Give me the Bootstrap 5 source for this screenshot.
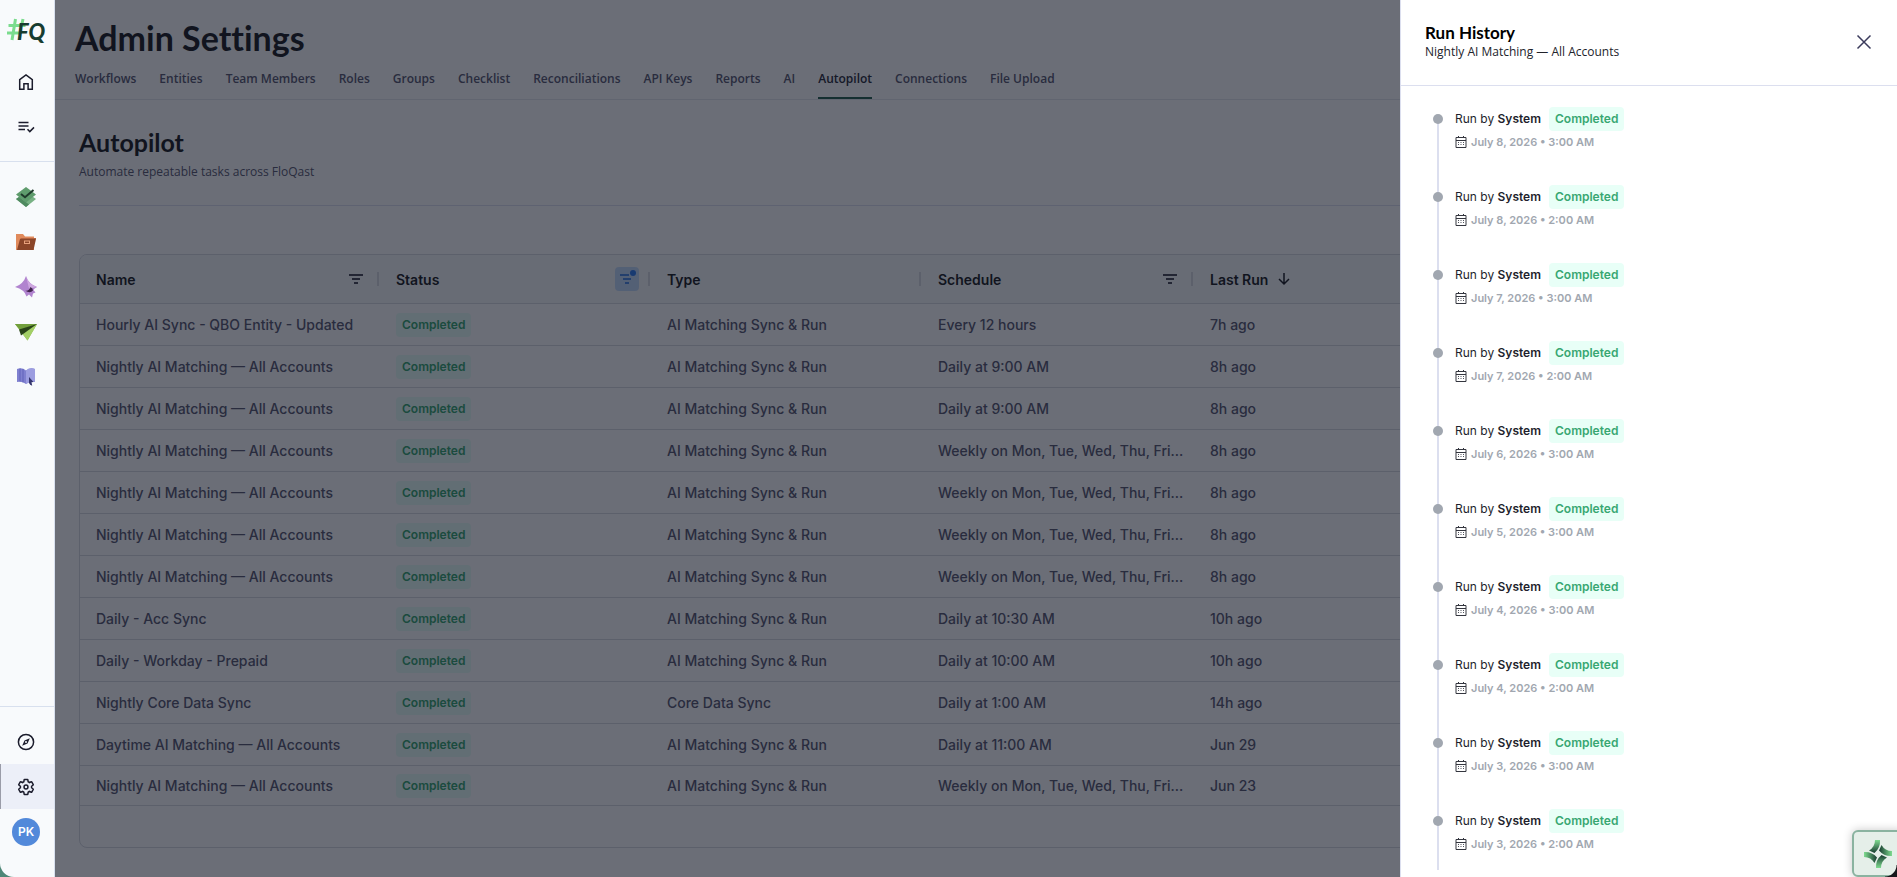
<!DOCTYPE html>
<html lang="en">
<head>
<meta charset="utf-8">
<meta name="viewport" content="width=device-width, initial-scale=1">
<title>Admin Settings – Autopilot</title>
<link href="https://cdn.jsdelivr.net/npm/bootstrap@5.3.0/dist/css/bootstrap.min.css" rel="stylesheet">
<style>
body{font-family:Inter,"Noto Sans",sans-serif;font-size:14px;color:#5a5a72;background:#fff;overflow:hidden}
.brand-font{font-family:Lato,"Open Sans",sans-serif;font-variant-ligatures:none}
.side-rail{width:55px;z-index:1050;background:#f8fafc;border-right:1px solid #d8e0ee;color:#1b1c2c;border-bottom-left-radius:14px}
.rail-corner{background:#4e8777;z-index:1049}
.rail-link{height:45px;width:100%;padding-right:2px;color:inherit}
.rail-link.current{background:#eceff8;box-shadow:inset 1px 0 #9a9ca8}
.rail-rule{border-top:1px solid #d8e0ee;padding-top:12px}
.rail-rule.upper{margin-top:12px}
.rail-logo{height:59px;padding:8px 0 0 6px}
.rail-user{padding:9px 0 31px 12px}
.avatar{width:28px;height:28px;background:#5289da;color:#fff;font-size:12px;font-weight:600}
.page-head{padding:18px 20px 0;border-bottom:1px solid #e6e8ee}
.page-head h1{font-size:34px;line-height:40px;font-weight:700;color:#1e1f24}
.tab-row{gap:23px;margin-top:11px}
.tab-row a{font-family:"Open Sans",sans-serif;font-size:12px;line-height:20px;font-weight:600;color:#5a5a72;text-decoration:none;padding-bottom:8px;border-bottom:2px solid transparent}
.tab-row a.active{color:#2c2d3a;border-color:#2a6350}
.section-head{padding:27px 0 23px;border-bottom:1px solid #dfe1f0}
.section-head h2{font-size:25px;line-height:30px;font-weight:700;color:#1e1f24}
.section-head p{font-family:"Open Sans",sans-serif;font-size:12px;line-height:20px;margin-top:5px}
.grid-frame{margin-top:48px;border:1px solid #d9dbe2;border-radius:8px;padding-bottom:41px;overflow:hidden}
.run-grid{table-layout:fixed;width:100%;border-collapse:separate;border-spacing:0}
.run-grid th,.run-grid td{padding:0 12px 0 16px;border-bottom:1px solid #d9dbe2;white-space:nowrap;overflow:hidden;text-overflow:ellipsis}
.run-grid th{height:49px;background:#f8fafb;color:#1e1f24;font-weight:600;position:relative}
.run-grid th:not(:last-child)::after{content:"";position:absolute;right:1px;top:17px;width:2px;height:14px;background:#d9dbe2}
.run-grid td{height:42px;font-weight:500;padding-right:4px}
.run-grid tr:last-child td{height:40px}
.w-name{width:300px}.w-mid{width:271px}.w-plan{width:272px}
.filter-btn{width:24px;height:24px;border:0;padding:0;border-radius:4px;background:none;color:#4b4d58}
.filter-btn.on{background:#c4dcfb;color:#4b8ae6}
.state{display:inline-block;height:24px;line-height:24px;padding:0 6px;border-radius:4px;font-size:12px;font-weight:600;color:#38a772;background:#e8fff7;vertical-align:middle}
.dim{position:fixed;inset:0;background:rgba(8,13,28,.6);z-index:1040}
.offcanvas.history{--bs-offcanvas-width:497px;border-left:1px solid #dcdfef;color:#1e1f2d;background:#fff}
.history .offcanvas-header{height:86px;border-bottom:1px solid #dcdfef;padding:0 24px 2px}
.history h2{font-size:17px;line-height:20px;font-weight:700;color:#000}
.history .sub{font-family:"Open Sans",sans-serif;font-size:12px;line-height:18px;color:#22232b}
.close-x{border:0;background:none;padding:0;width:18px;height:18px;color:#3b3b5c}
.history .offcanvas-body{padding:21px 32px 0;overflow:hidden}
.run-item{height:78px;padding-left:22px;position:relative;font-size:12px}
.run-item::before{content:"";position:absolute;left:4px;top:12px;bottom:-12px;width:2px;background:#dcdfef}
.run-item::after{content:"";position:absolute;left:0;top:7px;width:10px;height:10px;border-radius:50%;background:#a1a7b0}
.run-item:last-child{height:61px}
.run-item:last-child::before{bottom:0}
.run-item b{font-weight:600}
.when{font-size:11px;line-height:18px;font-weight:600;color:#a1a7b0;margin-top:2px}
.assist{position:fixed;right:-8px;bottom:0;width:53px;height:47px;border:2px solid #8ab3a0;border-radius:6px;background:#e5efe9;z-index:1060;padding:0 0 0 10px;text-align:left;box-shadow:0 0 10px rgba(0,0,0,.22)}
.win-corner{position:fixed;right:0;bottom:0;width:12px;height:12px;z-index:1061;background:radial-gradient(circle at 0 0,transparent 11px,#16181b 12px)}
</style>
</head>
<body>
<svg class="d-none" xmlns="http://www.w3.org/2000/svg">
  <symbol id="cal" viewBox="0 0 12 12"><path d="M1 1.500h10v10H1z" fill="none" stroke="#34363f"/><path d="M1 4.500h10M3.500 0v2M8.500 0v2" fill="none" stroke="#34363f"/><path d="M3 6.500h6M3 8.500h6" stroke="#50525c" stroke-dasharray="1 1.500" fill="none"/></symbol>
  <symbol id="filter" viewBox="0 0 24 24"><path d="M5 8h14M8 12h8M10 16h4" fill="none" stroke="currentColor" stroke-width="2"/></symbol>
</svg>

<div class="d-flex vh-100">
  <div class="rail-corner flex-shrink-0">
  <nav class="side-rail d-flex flex-column vh-100" aria-label="Main">
    <a class="rail-logo d-block" href="#" aria-label="FQ home">
      <svg class="overflow-visible" width="46" height="44" viewBox="0 0 46 44"><g stroke="#7bdc8e" stroke-width="3" fill="none"><path d="M9.500 11L6 32M17 11l-1.500 7M2.500 17.500h17M1 25h12"/></g><text x="11" y="32" font-family="Lato,sans-serif" font-size="22" font-weight="900" font-style="italic" fill="#173c30">FQ</text></svg>
    </a>
    <a class="rail-link d-flex align-items-center justify-content-center" href="#" aria-label="Home"><svg width="20" height="20" viewBox="0 0 20 20" fill="none" stroke="currentColor" stroke-width="1.500"><path d="M3.700 7.600L10 3l6.300 4.600v9.700h-4.200v-5.600H7.900v5.600H3.700z"/></svg></a>
    <a class="rail-link d-flex align-items-center justify-content-center" href="#" aria-label="Tasks"><svg width="20" height="20" viewBox="0 0 20 20" fill="none" stroke="currentColor" stroke-width="1.500"><path d="M2.500 5.500h10M2.500 9h10M2.500 12.500h6.500M11.500 12.300l2.300 2.300 4.200-4.200"/></svg></a>
    <div class="rail-rule upper"></div>
    <a class="rail-link d-flex align-items-center justify-content-center" href="#" aria-label="Close"><svg width="22" height="22" viewBox="0 0 22 22"><path d="M1 13l10-7 10 7-10 8z" fill="#78b184"/><path d="M1 13l10 8 3-2.400L4 10.900z" fill="#4f8a60"/><path d="M1 8.500L11 1l10 7.500-10 8z" fill="#5f9c6d"/><path d="M6 8l4 3.300L18.500 4" fill="none" stroke="#1f3a2b" stroke-width="2"/></svg></a>
    <a class="rail-link d-flex align-items-center justify-content-center" href="#" aria-label="Folders"><svg width="22" height="22" viewBox="0 0 22 22"><path d="M1 3h7l2 2.500h9V19H1z" fill="#e08a5c"/><path d="M5 8h16l-2.500 11H2z" fill="#8b4529"/><path d="M5 8h16v-1H6z" fill="#b5633f"/><rect x="9.500" y="10" width="5" height="2.500" fill="none" stroke="#e9a27d"/></svg></a>
    <a class="rail-link d-flex align-items-center justify-content-center" href="#" aria-label="AI"><svg width="22" height="22" viewBox="0 0 22 22"><path d="M11 0q2.500 8 11 11-3 1.500-3.500 3l2 2.500-2.500 1-1 4-3-3-2.500 2q-2-7-11.500-9.500Q8.500 8 11 0z" fill="#b184cf"/><path d="M11 0q2 8 11 11l-8 1.500z" fill="#cda6df"/><path d="M10 14.500q4 1 5.500-3.500 2.500 1 2.500 3.500-3 3.500-8 0z" fill="#43264f"/></svg></a>
    <a class="rail-link d-flex align-items-center justify-content-center" href="#" aria-label="Send"><svg width="22" height="22" viewBox="0 0 22 22"><path d="M0 3h22L12.500 19.500z" fill="#8fbd50"/><path d="M0 3h22L5 9z" fill="#729f3c"/><path d="M22 3L7 12l5.500 7.500z" fill="#a3cf66"/><path d="M22 3L4 8.500l2 6z" fill="#294319"/></svg></a>
    <a class="rail-link d-flex align-items-center justify-content-center" href="#" aria-label="Library"><svg width="22" height="22" viewBox="0 0 22 22"><path d="M2 3q5-2 9 1.500Q15 1 20 3v13q-5-1-9 2-4-3-9-2z" fill="#7f80d0"/><path d="M11 4.500Q15 1 20 3v13q-5-1-9 2z" fill="#9c9de0"/><path d="M5 2.500v13M8 3v13.500" stroke="#6263bb"/><path d="M14 11l4.500 5-2 .3.700 3.500-2-1L14 17z" fill="#34346e"/></svg></a>
    <div class="mt-auto rail-rule"></div>
    <a class="rail-link d-flex align-items-center justify-content-center" href="#" aria-label="Explore"><svg width="20" height="20" viewBox="0 0 20 20" fill="none" stroke="currentColor" stroke-width="1.500"><circle cx="10" cy="10" r="7.600"/><path d="M13.800 6.200l-2.300 5.300-5.300 2.300 2.300-5.300z" fill="currentColor" stroke="none"/><circle cx="10" cy="10" r="1" fill="#f8fafc" stroke="none"/></svg></a>
    <a class="rail-link current d-flex align-items-center justify-content-center" href="#" aria-label="Settings"><svg width="18" height="18" viewBox="0 0 24 24" fill="none" stroke="currentColor" stroke-width="2"><path d="M19.430 12.980c.040-.320.070-.640.070-.980s-.030-.660-.070-.980l2.110-1.650c.190-.150.240-.420.120-.640l-2-3.460c-.090-.160-.260-.250-.440-.250-.060 0-.120.010-.170.030l-2.490 1c-.520-.400-1.080-.730-1.690-.980l-.380-2.650C14.460 2.180 14.250 2 14 2h-4c-.250 0-.460.180-.490.420l-.380 2.650c-.610.250-1.170.590-1.690.980l-2.490-1c-.060-.020-.120-.030-.180-.030-.170 0-.340.090-.430.250l-2 3.460c-.130.220-.070.490.120.640l2.110 1.650c-.040.320-.070.650-.070.980s.030.660.070.980l-2.110 1.650c-.190.150-.240.420-.120.640l2 3.460c.090.160.260.250.440.250.060 0 .120-.010.170-.030l2.490-1c.520.400 1.080.730 1.690.980l.380 2.650c.030.240.240.420.490.420h4c.250 0 .460-.180.490-.420l.380-2.650c.610-.250 1.170-.590 1.690-.980l2.490 1c.060.020.120.030.180.030.170 0 .340-.090.430-.250l2-3.460c.120-.220.070-.490-.120-.640z"/><circle cx="12" cy="12" r="2.600"/></svg></a>
    <div class="rail-user"><div class="avatar rounded-circle d-flex align-items-center justify-content-center">PK</div></div>
  </nav>
  </div>

  <main class="flex-grow-1" style="min-width:0">
    <header class="page-head brand-font">
      <h1 class="m-0">Admin Settings</h1>
      <nav class="tab-row d-flex" aria-label="Settings">
        <a href="#">Workflows</a><a href="#">Entities</a><a href="#">Team Members</a><a href="#">Roles</a><a href="#">Groups</a><a href="#">Checklist</a><a href="#">Reconciliations</a><a href="#">API Keys</a><a href="#">Reports</a><a href="#">AI</a><a href="#" class="active" aria-current="page">Autopilot</a><a href="#">Connections</a><a href="#">File Upload</a>
      </nav>
    </header>
    <section class="px-4">
      <div class="section-head brand-font">
        <h2 class="m-0">Autopilot</h2>
        <p class="mb-0">Automate repeatable tasks across FloQast</p>
      </div>
      <div class="grid-frame">
        <table class="run-grid">
          <colgroup><col class="w-name"><col class="w-mid"><col class="w-mid"><col class="w-plan"><col></colgroup>
          <thead><tr>
            <th><div class="d-flex align-items-center justify-content-between">Name <button class="filter-btn" aria-label="Filter name"><svg class="d-block" width="24" height="24"><use href="#filter"/></svg></button></div></th>
            <th><div class="d-flex align-items-center justify-content-between">Status <button class="filter-btn on" aria-label="Filter status"><svg class="d-block" width="24" height="24" viewBox="0 0 24 24"><path d="M5 8h9M8 12h8M10 16h4" fill="none" stroke="currentColor" stroke-width="2"/><circle cx="18" cy="6" r="3" fill="#2f7df0"/></svg></button></div></th>
            <th>Type</th>
            <th><div class="d-flex align-items-center justify-content-between">Schedule <button class="filter-btn" aria-label="Filter schedule"><svg class="d-block" width="24" height="24"><use href="#filter"/></svg></button></div></th>
            <th><div class="d-flex align-items-center">Last Run <svg class="ms-2" width="16" height="16" viewBox="0 0 16 16" fill="none" stroke="currentColor" stroke-width="1.500"><path d="M8 2v11M3 8l5 5 5-5"/></svg></div></th>
          </tr></thead>
          <tbody>
            <tr><td>Hourly AI Sync - QBO Entity - Updated</td><td><span class="state">Completed</span></td><td>AI Matching Sync &amp; Run</td><td>Every 12 hours</td><td>7h ago</td></tr>
            <tr><td>Nightly AI Matching — All Accounts</td><td><span class="state">Completed</span></td><td>AI Matching Sync &amp; Run</td><td>Daily at 9:00 AM</td><td>8h ago</td></tr>
            <tr><td>Nightly AI Matching — All Accounts</td><td><span class="state">Completed</span></td><td>AI Matching Sync &amp; Run</td><td>Daily at 9:00 AM</td><td>8h ago</td></tr>
            <tr><td>Nightly AI Matching — All Accounts</td><td><span class="state">Completed</span></td><td>AI Matching Sync &amp; Run</td><td>Weekly on Mon, Tue, Wed, Thu, Fri...</td><td>8h ago</td></tr>
            <tr><td>Nightly AI Matching — All Accounts</td><td><span class="state">Completed</span></td><td>AI Matching Sync &amp; Run</td><td>Weekly on Mon, Tue, Wed, Thu, Fri...</td><td>8h ago</td></tr>
            <tr><td>Nightly AI Matching — All Accounts</td><td><span class="state">Completed</span></td><td>AI Matching Sync &amp; Run</td><td>Weekly on Mon, Tue, Wed, Thu, Fri...</td><td>8h ago</td></tr>
            <tr><td>Nightly AI Matching — All Accounts</td><td><span class="state">Completed</span></td><td>AI Matching Sync &amp; Run</td><td>Weekly on Mon, Tue, Wed, Thu, Fri...</td><td>8h ago</td></tr>
            <tr><td>Daily - Acc Sync</td><td><span class="state">Completed</span></td><td>AI Matching Sync &amp; Run</td><td>Daily at 10:30 AM</td><td>10h ago</td></tr>
            <tr><td>Daily - Workday - Prepaid</td><td><span class="state">Completed</span></td><td>AI Matching Sync &amp; Run</td><td>Daily at 10:00 AM</td><td>10h ago</td></tr>
            <tr><td>Nightly Core Data Sync</td><td><span class="state">Completed</span></td><td>Core Data Sync</td><td>Daily at 1:00 AM</td><td>14h ago</td></tr>
            <tr><td>Daytime AI Matching — All Accounts</td><td><span class="state">Completed</span></td><td>AI Matching Sync &amp; Run</td><td>Daily at 11:00 AM</td><td>Jun 29</td></tr>
            <tr><td>Nightly AI Matching — All Accounts</td><td><span class="state">Completed</span></td><td>AI Matching Sync &amp; Run</td><td>Weekly on Mon, Tue, Wed, Thu, Fri...</td><td>Jun 23</td></tr>
          </tbody>
        </table>
      </div>
    </section>
  </main>
</div>

<div class="dim"></div>

<aside class="offcanvas offcanvas-end show history" data-bs-backdrop="false" data-bs-scroll="true" tabindex="-1" aria-labelledby="historyTitle">
  <div class="offcanvas-header brand-font">
    <div><h2 class="m-0" id="historyTitle">Run History</h2><div class="sub">Nightly AI Matching — All Accounts</div></div>
    <button class="close-x" aria-label="Close"><svg class="d-block" width="18" height="18" viewBox="0 0 18 18" stroke="currentColor" stroke-width="1.500"><path d="M2.500 2.500l13 13M15.500 2.500l-13 13"/></svg></button>
  </div>
  <div class="offcanvas-body">
    <ol class="list-unstyled m-0">
      <li class="run-item"><div class="d-flex align-items-center gap-2"><span>Run by <b>System</b></span><span class="state">Completed</span></div><div class="when d-flex align-items-center"><svg class="me-1" width="12" height="12"><use href="#cal"/></svg>July 8, 2026 • 3:00 AM</div></li>
      <li class="run-item"><div class="d-flex align-items-center gap-2"><span>Run by <b>System</b></span><span class="state">Completed</span></div><div class="when d-flex align-items-center"><svg class="me-1" width="12" height="12"><use href="#cal"/></svg>July 8, 2026 • 2:00 AM</div></li>
      <li class="run-item"><div class="d-flex align-items-center gap-2"><span>Run by <b>System</b></span><span class="state">Completed</span></div><div class="when d-flex align-items-center"><svg class="me-1" width="12" height="12"><use href="#cal"/></svg>July 7, 2026 • 3:00 AM</div></li>
      <li class="run-item"><div class="d-flex align-items-center gap-2"><span>Run by <b>System</b></span><span class="state">Completed</span></div><div class="when d-flex align-items-center"><svg class="me-1" width="12" height="12"><use href="#cal"/></svg>July 7, 2026 • 2:00 AM</div></li>
      <li class="run-item"><div class="d-flex align-items-center gap-2"><span>Run by <b>System</b></span><span class="state">Completed</span></div><div class="when d-flex align-items-center"><svg class="me-1" width="12" height="12"><use href="#cal"/></svg>July 6, 2026 • 3:00 AM</div></li>
      <li class="run-item"><div class="d-flex align-items-center gap-2"><span>Run by <b>System</b></span><span class="state">Completed</span></div><div class="when d-flex align-items-center"><svg class="me-1" width="12" height="12"><use href="#cal"/></svg>July 5, 2026 • 3:00 AM</div></li>
      <li class="run-item"><div class="d-flex align-items-center gap-2"><span>Run by <b>System</b></span><span class="state">Completed</span></div><div class="when d-flex align-items-center"><svg class="me-1" width="12" height="12"><use href="#cal"/></svg>July 4, 2026 • 3:00 AM</div></li>
      <li class="run-item"><div class="d-flex align-items-center gap-2"><span>Run by <b>System</b></span><span class="state">Completed</span></div><div class="when d-flex align-items-center"><svg class="me-1" width="12" height="12"><use href="#cal"/></svg>July 4, 2026 • 2:00 AM</div></li>
      <li class="run-item"><div class="d-flex align-items-center gap-2"><span>Run by <b>System</b></span><span class="state">Completed</span></div><div class="when d-flex align-items-center"><svg class="me-1" width="12" height="12"><use href="#cal"/></svg>July 3, 2026 • 3:00 AM</div></li>
      <li class="run-item"><div class="d-flex align-items-center gap-2"><span>Run by <b>System</b></span><span class="state">Completed</span></div><div class="when d-flex align-items-center"><svg class="me-1" width="12" height="12"><use href="#cal"/></svg>July 3, 2026 • 2:00 AM</div></li>
    </ol>
  </div>
</aside>

<button class="assist" aria-label="Assistant"><svg width="28" height="28" viewBox="0 0 28 28"><defs><linearGradient id="g" x1="0" y1="0" x2="0" y2="1"><stop offset="0" stop-color="#7fdc90"/><stop offset="1" stop-color="#173c30"/></linearGradient><path id="arm" d="M11 0h5q.5 8-5.500 13L5 10.500Q11 7 11 0z" fill="url(#g)"/></defs><use href="#arm"/><use href="#arm" transform="rotate(90 14 14)"/><use href="#arm" transform="rotate(180 14 14)"/><use href="#arm" transform="rotate(270 14 14)"/></svg></button>
<div class="win-corner"></div>
<script src="https://cdn.jsdelivr.net/npm/bootstrap@5.3.0/dist/js/bootstrap.bundle.min.js"></script>
</body>
</html>
